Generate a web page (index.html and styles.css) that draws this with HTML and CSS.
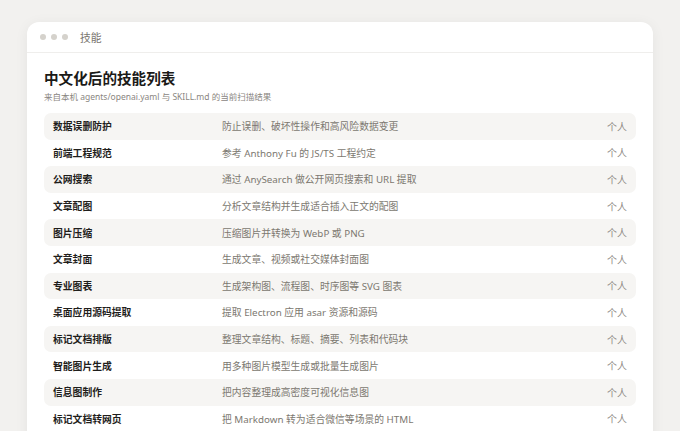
FILE: index.html
```html
<!DOCTYPE html>
<html lang="zh-CN">
<head>
    <meta charset="UTF-8">
    <meta name="viewport" content="width=device-width, initial-scale=1.0">
    <title>技能</title>
    <link rel="stylesheet" href="styles.css">
</head>
<body>
    <div class="window">
        <div class="titlebar">
            <span class="dot"></span>
            <span class="dot"></span>
            <span class="dot"></span>
            <span class="title">技能</span>
        </div>

        <div class="content">
            <h1>中文化后的技能列表</h1>
            <p class="sub">来自本机 agents/openai.yaml 与 SKILL.md 的当前扫描结果</p>

            <ul class="skills">
                <li><span class="name">数据误删防护</span><span class="desc">防止误删、破坏性操作和高风险数据变更</span><span class="scope">个人</span></li>
                <li><span class="name">前端工程规范</span><span class="desc">参考 Anthony Fu 的 JS/TS 工程约定</span><span class="scope">个人</span></li>
                <li><span class="name">公网搜索</span><span class="desc">通过 AnySearch 做公开网页搜索和 URL 提取</span><span class="scope">个人</span></li>
                <li><span class="name">文章配图</span><span class="desc">分析文章结构并生成适合插入正文的配图</span><span class="scope">个人</span></li>
                <li><span class="name">图片压缩</span><span class="desc">压缩图片并转换为 WebP 或 PNG</span><span class="scope">个人</span></li>
                <li><span class="name">文章封面</span><span class="desc">生成文章、视频或社交媒体封面图</span><span class="scope">个人</span></li>
                <li><span class="name">专业图表</span><span class="desc">生成架构图、流程图、时序图等 SVG 图表</span><span class="scope">个人</span></li>
                <li><span class="name">桌面应用源码提取</span><span class="desc">提取 Electron 应用 asar 资源和源码</span><span class="scope">个人</span></li>
                <li><span class="name">标记文档排版</span><span class="desc">整理文章结构、标题、摘要、列表和代码块</span><span class="scope">个人</span></li>
                <li><span class="name">智能图片生成</span><span class="desc">用多种图片模型生成或批量生成图片</span><span class="scope">个人</span></li>
                <li><span class="name">信息图制作</span><span class="desc">把内容整理成高密度可视化信息图</span><span class="scope">个人</span></li>
                <li><span class="name">标记文档转网页</span><span class="desc">把 Markdown 转为适合微信等场景的 HTML</span><span class="scope">个人</span></li>
            </ul>
        </div>
    </div>
</body>
</html>
```

FILE: styles.css
```css
html, body {
    height: 100%;
    overflow: hidden;
}
body {
    margin: 0;
    padding: 22px 27px 0;
    box-sizing: border-box;
    background: #f2f1ef;
    font-family: "Noto Sans", "Noto Sans CJK SC", sans-serif;
}
/* the window keeps going below the fold */
.window {
    background: #fff;
    border-radius: 12px;
    box-shadow: 0 2px 14px rgba(0,0,0,0.06);
    min-height: calc(100% + 24px);
}
.titlebar {
    height: 30px;
    display: flex;
    align-items: center;
    padding-left: 13px;
    gap: 5px;
    border-bottom: 1px solid #efeeec;
}
.dot {
    width: 6px;
    height: 6px;
    border-radius: 50%;
    background: #d5d2cc;
}
.title {
    margin-left: 7px;
    font-size: 10.8px;
    color: #7a766f;
}
.content {
    padding: 15px 17px 0;
}
h1 {
    margin: 0;
    font-size: 14.6px;
    line-height: 20px;
    font-weight: 700;
    color: #1b1a18;
}
.sub {
    margin: 3px 0 10px;
    font-size: 8.5px;
    line-height: 12px;
    color: #8a867f;
}
.skills {
    list-style: none;
    margin: 0;
    padding: 0;
}
.skills li {
    display: grid;
    grid-template-columns: 169px 1fr auto;
    align-items: center;
    height: 26.6px;
    padding: 0 9px;
    border-radius: 7px;
    font-size: 9.8px;
}
.skills li:nth-child(odd) {
    background: #f6f5f3;
}
.name {
    font-weight: 700;
    color: #1f1e1c;
}
.desc {
    color: #7c7870;
}
.scope {
    color: #8e8a84;
    font-size: 10px;
}
```
